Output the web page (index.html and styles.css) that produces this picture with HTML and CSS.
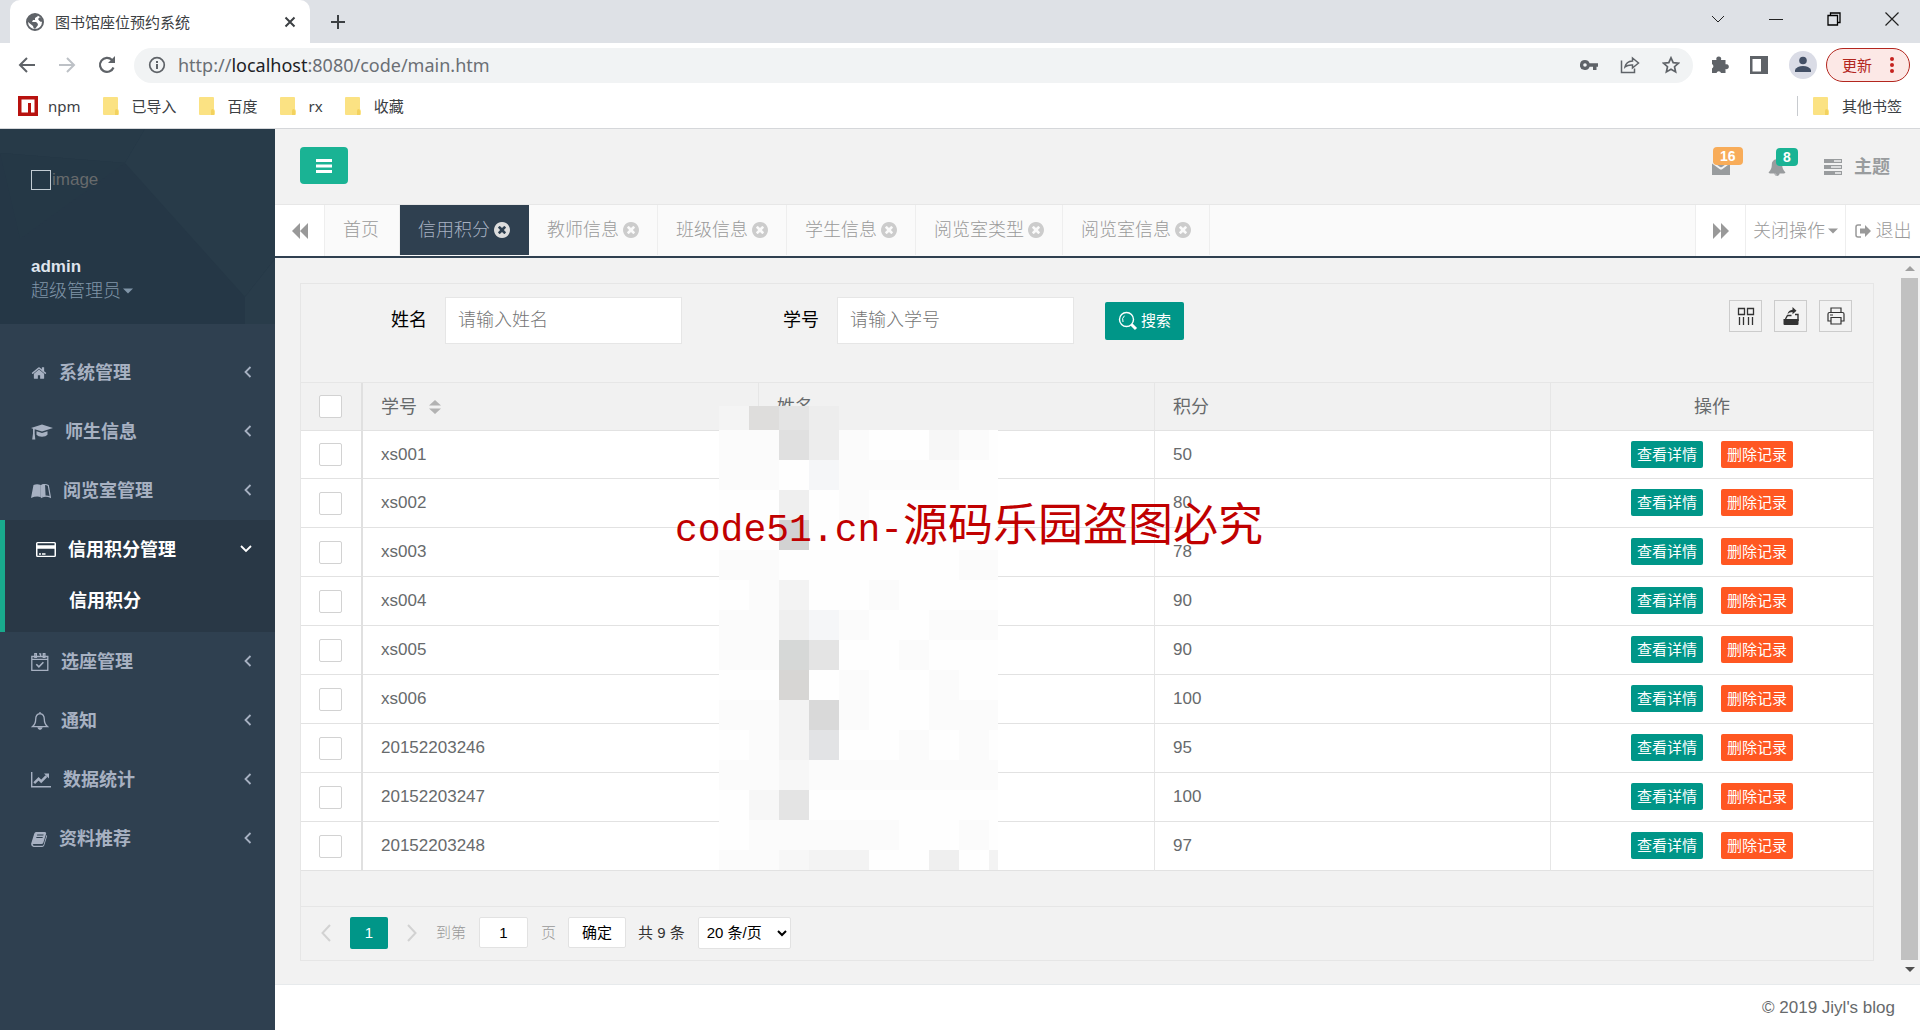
FILE: index.html
```html
<!DOCTYPE html>
<html lang="zh-CN">
<head>
<meta charset="utf-8">
<title>图书馆座位预约系统</title>
<link rel="stylesheet" href="styles.css">
</head>
<body>
<svg class="sprite" aria-hidden="true">
  <symbol id="i-home" viewBox="0 0 1792 1792"><path d="M1472 992v480q0 26-19 45t-45 19h-384v-384h-256v384h-384q-26 0-45-19t-19-45v-480q0-1 .5-3t.5-3l575-474 575 474q1 2 1 6zm223-69l-62 74q-8 9-21 11h-3q-13 0-21-7l-692-577-692 577q-12 8-24 7-13-2-21-11l-62-74q-8-10-7-23.5t11-21.5l719-599q32-26 76-26t76 26l244 204v-195q0-14 9-23t23-9h192q14 0 23 9t9 23v408l219 182q10 8 11 21.5t-7 23.5z"/></symbol>
  <symbol id="i-bell" viewBox="0 0 1792 1792"><path d="M912 1696q0-16-16-16-59 0-101.5-42.5t-42.5-101.5q0-16-16-16t-16 16q0 73 51.5 124.5t124.5 51.5q16 0 16-16zm816-288q0 52-38 90t-90 38h-448q0 106-75 181t-181 75-181-75-75-181h-448q-52 0-90-38t-38-90q50-42 91-88t85-119.5 74.5-158.5 50-206 19.5-260q0-152 117-282.5t307-158.5q-8-19-8-39 0-40 28-68t68-28 68 28 28 68q0 20-8 39 190 28 307 158.5t117 282.5q0 139 19.5 260t50 206 74.5 158.5 85 119.5 91 88z"/></symbol>
  <symbol id="i-close" viewBox="128 128 1536 1536"><path d="M1277 1122q0-26-19-45l-181-181 181-181q19-19 19-45 0-27-19-46l-90-90q-19-19-46-19-26 0-45 19l-181 181-181-181q-19-19-45-19-27 0-46 19l-90 90q-19 19-19 46 0 26 19 45l181 181-181 181q-19 19-19 45 0 27 19 46l90 90q19 19 46 19 26 0 45-19l181-181 181 181q19 19 45 19 27 0 46-19l90-90q19-19 19-46zm387-226q0 209-103 385.5t-279.5 279.5-385.5 103-385.5-103-279.5-279.5-103-385.5 103-385.5 279.5-279.5 385.5-103 385.5 103 279.5 279.5 103 385.5z"/></symbol>
  <symbol id="i-cap" viewBox="0 0 22 18"><path d="M11 1.500L22 5l-11 3.600L3.700 6.200v4.300l.6 6H1.200l.8-6V5.700L0 5z"/><path d="M5.500 8.300L11 10l5.500-1.700v3.500q-1.500 2-5.500 2t-5.500-2z"/></symbol>
  <symbol id="i-reader" viewBox="0 0 20 18"><path d="M2.500 3Q6 1.300 9.800 3v12.300Q6 13.600 0 16z"/><path d="M10.500 3.500Q14 1.500 17.300 3.500L19.400 15.300Q15 13 10.500 15.300z" fill="none" stroke="currentColor" stroke-width="1.200"/><path d="M10 3q2.500-1.200 4-1l.6 12q-2.500 0-4.600 1.300z"/></symbol>
  <symbol id="i-card" viewBox="0 0 20 18"><path fill-rule="evenodd" d="M1.500 1h17Q20 1 20 2.500v12q0 1.500-1.500 1.500h-17Q0 16 0 14.500v-12Q0 1 1.500 1zm0 1.300v2h17v-2zm0 5.400v7h17v-7zM3 12.300h2v1.400H3zm3 0h3.500v1.400H6z"/></symbol>
  <symbol id="i-calendar" viewBox="0 0 18 18"><g fill="none" stroke="currentColor" stroke-width="1.300"><path d="M.8 3.500h16v13.800H.8z"/><path d="M1 6.300h16M3.800.7h1.600v3.600H3.800zM12.300.7h1.600v3.600h-1.600zM8 .9h1.600v3"/><path d="M5.300 11.200l2.600 2.600 4.500-4.500" stroke-width="1.600"/></g></symbol>
  <symbol id="i-bell-o" viewBox="0 0 18 18"><path d="M9 1.600C5.700 2 4.700 4.600 4.700 7.200c0 3.700-1.500 6-3.400 7.500h15.400c-1.900-1.500-3.400-3.800-3.400-7.500C13.300 4.600 12.300 2 9 1.600zM9 0v1.600" fill="none" stroke="currentColor" stroke-width="1.300"/><path d="M6.300 15.300h5.400Q11 18 9 18t-2.700-2.700z"/></symbol>
  <symbol id="i-chart" viewBox="0 0 20 18"><path d="M.7 1v14.800H20" fill="none" stroke="currentColor" stroke-width="1.400"/><path d="M3.200 12.200l4.400-4.400 2.600 2.600 5.200-5.200" fill="none" stroke="currentColor" stroke-width="2.500"/><path d="M13 2.500h5v5z"/></symbol>
  <symbol id="i-book" viewBox="0 0 16 18"><path fill-rule="evenodd" d="M5 2h9q1.600.3 1 2l-2.600 8.500q-.5 1.500-2 1.500H2.500q-1 0-.7.8.2.9 1.500.9h8q1 0 1.300-1L15.500 5q.8.700.4 1.800L13.200 15.600q-.5 1.400-2 1.400H2.600Q-.3 16.300.2 13.500L3.300 3.500Q3.800 2 5 2zm1.200 2.500L6 5.600h6.300l.3-1.100zm-.7 2.400L5.200 8h6.300l.3-1.100z"/></symbol>
  <symbol id="i-left" viewBox="0 0 10 16"><path d="M7.500 3L2.500 8l5 5" fill="none" stroke="currentColor" stroke-width="1.800"/></symbol>
  <symbol id="i-down" viewBox="0 0 14 10"><path d="M2 2l5 5 5-5" fill="none" stroke="currentColor" stroke-width="1.800"/></symbol>
  <symbol id="i-caret" viewBox="0 0 10 6"><path d="M0 .5h10L5 5.500z"/></symbol>
  <symbol id="i-back2" viewBox="0 0 16 16"><path d="M8 0v16L0 8zM16 0v16L8 8z"/></symbol>
  <symbol id="i-fwd2" viewBox="0 0 16 16"><path d="M0 0v16l8-8zM8 0v16l8-8z"/></symbol>
  <symbol id="i-folder" viewBox="0 0 16 18"><path d="M1 0h13q1 0 1 1v11l1 2v3q0 1-1 1H1q-1 0-1-1V1q0-1 1-1z" fill="#fbe283"/><path d="M12 18v-4q0-2 1.500-2t1.500 2v4z" fill="#f3d25e"/></symbol>
</svg>

<header class="chrome">
  <div class="tabstrip">
    <div class="browser-tab">
      <svg class="ico18" viewBox="0 0 18 18"><circle cx="9" cy="9" r="8" fill="none" stroke="#5f6368" stroke-width="2"/><path d="M2 5q3-4 7-4 3 0 3 2L9 5v2H7l-1 2h4q2 1 2 3l-3 4q-2-1-2-3l-5-4zM12 6l2-2 3 4-2 1q-2-1-3-3z" fill="#5f6368"/></svg>
      <span class="browser-title">图书馆座位预约系统</span>
      <button class="plain" aria-label="关闭标签页"><svg width="12" height="12" viewBox="0 0 12 12"><path d="M1.500 1.500l9 9m0-9l-9 9" stroke="#3c4043" stroke-width="2"/></svg></button>
    </div>
    <button class="plain newtab" aria-label="新标签页"><svg width="16" height="16" viewBox="0 0 16 16"><path d="M8 1v14M1 8h14" stroke="#3c4043" stroke-width="2"/></svg></button>
    <div class="window-buttons">
      <button class="plain" aria-label="搜索标签页"><svg width="14" height="14" viewBox="0 0 14 14"><path d="M1 4l6 6 6-6" fill="none" stroke="#222"/></svg></button>
      <button class="plain" aria-label="最小化"><svg width="14" height="14" viewBox="0 0 14 14"><path d="M0 7.500h14" stroke="#222"/></svg></button>
      <button class="plain" aria-label="还原"><svg width="14" height="14" viewBox="0 0 14 14"><path d="M1 3.500h9.500V13H1zM3.500 3.500V1H13v9.500h-2.500" fill="none" stroke="#000" stroke-width="1.300"/></svg></button>
      <button class="plain" aria-label="关闭"><svg width="14" height="14" viewBox="0 0 14 14"><path d="M.5.5l13 13m0-13l-13 13" stroke="#222" stroke-width="1.200"/></svg></button>
    </div>
  </div>
  <div class="addressbar">
    <button class="plain" aria-label="后退"><svg width="18" height="18" viewBox="0 0 18 18"><path d="M17 9H2m7-7L2 9l7 7" fill="none" stroke="#5f6368" stroke-width="2"/></svg></button>
    <button class="plain" aria-label="前进"><svg width="18" height="18" viewBox="0 0 18 18"><path d="M1 9h15M9 2l7 7-7 7" fill="none" stroke="#bdc1c6" stroke-width="2"/></svg></button>
    <button class="plain" aria-label="重新加载"><svg width="18" height="18" viewBox="0 0 18 18"><path d="M15.500 11.500A7 7 0 1 1 14 4" fill="none" stroke="#5f6368" stroke-width="2.200"/><path d="M17 0v7h-7z" fill="#5f6368"/></svg></button>
    <div class="omnibox">
      <svg width="18" height="18" viewBox="0 0 18 18"><circle cx="9" cy="9" r="7.300" fill="none" stroke="#5f6368" stroke-width="1.700"/><path d="M9 8v5M9 5v2" stroke="#5f6368" stroke-width="2"/></svg>
      <span class="url">http://<b>localhost</b>:8080/code/main.htm</span>
      <svg width="18" height="18" viewBox="0 0 18 18"><path fill-rule="evenodd" d="M5 4a5 5 0 0 1 4.600 3.200H18v3.600h-1.500V14H13v-3.200H9.600A5 5 0 1 1 5 4zm0 3.200a1.800 1.800 0 1 0 0 3.600 1.800 1.800 0 0 0 0-3.600z" fill="#5f6368"/></svg>
      <svg width="20" height="18" viewBox="0 0 20 18"><path d="M1.500 4.500v12h13v-4M5 11q1-5.500 7.500-6V2l6 5-6 5V9q-5-.2-7.500 2z" fill="none" stroke="#5f6368" stroke-width="1.500"/></svg>
      <svg width="18" height="18" viewBox="0 0 18 18"><path d="M9 1.800l2.200 4.800 5.200.6-3.900 3.500 1.100 5.200L9 13.300l-4.600 2.600 1.100-5.200-3.900-3.500 5.200-.6z" fill="none" stroke="#5f6368" stroke-width="1.700"/></svg>
    </div>
    <div class="browser-actions">
      <svg width="18" height="18" viewBox="0 0 18 18"><path d="M1 4h4.500a2.500 2.500 0 1 1 4.500 0h4.500v4.300a2.500 2.500 0 1 1 0 4.700v4H10a2.300 2.300 0 0 0-4.500 0H1v-4.500a2.500 2.500 0 0 0 0-4.500z" fill="#5f6368"/></svg>
      <svg width="18" height="18" viewBox="0 0 18 18"><path fill-rule="evenodd" d="M0 0h18v18H0zM2.500 3v12.500H11V3z" fill="#5f6368"/></svg>
      <svg width="28" height="28" viewBox="0 0 28 28"><circle cx="14" cy="14" r="14" fill="#dadce6"/><circle cx="14" cy="9.500" r="3.800" fill="#435066"/><path d="M6 21v-2q2-4 8-4t8 4v2z" fill="#435066"/></svg>
      <button class="update">更新<svg width="4" height="16" viewBox="0 0 4 16"><g fill="#c5221f"><circle cx="2" cy="2" r="2"/><circle cx="2" cy="8" r="2"/><circle cx="2" cy="14" r="2"/></g></svg></button>
    </div>
  </div>
  <nav class="bookmarks">
    <a href="#"><svg width="20" height="20" viewBox="0 0 20 20"><path d="M0 0h20v20H0z" fill="#b8120f"/><path d="M3.500 3.500h13v13H13V7h-3v9.500H3.500z" fill="#fff"/></svg>npm</a>
    <a href="#"><svg width="16" height="18"><use href="#i-folder"/></svg>已导入</a>
    <a href="#"><svg width="16" height="18"><use href="#i-folder"/></svg>百度</a>
    <a href="#"><svg width="16" height="18"><use href="#i-folder"/></svg>rx</a>
    <a href="#"><svg width="16" height="18"><use href="#i-folder"/></svg>收藏</a>
    <a href="#" class="other"><svg width="16" height="18"><use href="#i-folder"/></svg>其他书签</a>
  </nav>
</header>

<div class="app">
  <aside class="sidebar">
    <div class="profile">
      <svg class="profile-bg" viewBox="0 0 275 195" preserveAspectRatio="none"><path d="M0 0h145l-20 34L0 24z" fill="#273a48"/><path d="M145 0h130v130l-30 38L125 34z" fill="#283b49"/><path d="M0 24l125 10L20 110z" fill="#253846"/><path d="M275 130l-30 38v27h30z" fill="#293c4a"/></svg>
      <div class="avatar"><span class="avatar-box"></span>image</div>
      <strong>admin</strong>
      <a href="#" class="role">超级管理员<svg width="10" height="6"><use href="#i-caret"/></svg></a>
    </div>
    <nav class="menu">
      <a href="#"><svg width="16" height="18"><use href="#i-home"/></svg>系统管理<svg class="arrow" width="10" height="16"><use href="#i-left"/></svg></a>
      <a href="#"><svg width="22" height="18"><use href="#i-cap"/></svg>师生信息<svg class="arrow" width="10" height="16"><use href="#i-left"/></svg></a>
      <a href="#"><svg width="20" height="18"><use href="#i-reader"/></svg>阅览室管理<svg class="arrow" width="10" height="16"><use href="#i-left"/></svg></a>
      <div class="group">
        <a href="#"><svg width="20" height="18"><use href="#i-card"/></svg>信用积分管理<svg class="arrow" width="14" height="10"><use href="#i-down"/></svg></a>
        <a href="#" class="sub">信用积分</a>
      </div>
      <a href="#"><svg width="18" height="18"><use href="#i-calendar"/></svg>选座管理<svg class="arrow" width="10" height="16"><use href="#i-left"/></svg></a>
      <a href="#"><svg width="18" height="18"><use href="#i-bell-o"/></svg>通知<svg class="arrow" width="10" height="16"><use href="#i-left"/></svg></a>
      <a href="#"><svg width="20" height="18"><use href="#i-chart"/></svg>数据统计<svg class="arrow" width="10" height="16"><use href="#i-left"/></svg></a>
      <a href="#"><svg width="16" height="18"><use href="#i-book"/></svg>资料推荐<svg class="arrow" width="10" height="16"><use href="#i-left"/></svg></a>
    </nav>
  </aside>

  <div class="main">
    <div class="navbar">
      <button class="toggle" aria-label="收起菜单"><svg width="16" height="14" viewBox="0 0 16 14"><path d="M0 1.500h16M0 7h16M0 12.500h16" stroke="#fff" stroke-width="3"/></svg></button>
      <div class="navbar-right">
        <a href="#" class="notice"><svg width="18" height="16" viewBox="0 0 18 16"><path d="M0 4.500l7.500 5.500q1.500 1 3 0L18 4.500V16H0z"/><path d="M1 1h16v2l-7 5q-1 .7-2 0L1 3z"/></svg><span class="badge orange">16</span></a>
        <a href="#" class="notice"><svg width="18" height="18"><use href="#i-bell"/></svg><span class="badge green">8</span></a>
        <a href="#" class="theme"><svg width="18" height="16" viewBox="0 0 18 16"><path fill-rule="evenodd" d="M0 0h18v4H0zm10 1.300v1.400h7V1.300zM0 6h18v4H0zm7 1.300v1.400h10V7.300zM0 12h18v4H0zm11 1.300v1.400h6v-1.400z"/></svg>主题</a>
      </div>
    </div>
    <div class="tabs">
      <button class="tab-btn narrow" aria-label="向左滚动"><svg width="16" height="16"><use href="#i-back2"/></svg></button>
      <nav class="tab-list">
        <a href="#">首页</a>
        <a href="#" class="active">信用积分<svg width="16" height="16"><use href="#i-close"/></svg></a>
        <a href="#">教师信息<svg width="16" height="16"><use href="#i-close"/></svg></a>
        <a href="#">班级信息<svg width="16" height="16"><use href="#i-close"/></svg></a>
        <a href="#">学生信息<svg width="16" height="16"><use href="#i-close"/></svg></a>
        <a href="#">阅览室类型<svg width="16" height="16"><use href="#i-close"/></svg></a>
        <a href="#">阅览室信息<svg width="16" height="16"><use href="#i-close"/></svg></a>
      </nav>
      <button class="tab-btn narrow" aria-label="向右滚动"><svg width="16" height="16"><use href="#i-fwd2"/></svg></button>
      <button class="tab-btn wide">关闭操作<svg width="10" height="6"><use href="#i-caret"/></svg></button>
      <a href="#" class="tab-btn exit"><svg width="16" height="14" viewBox="0 0 16 14"><path d="M6 1H3Q1 1 1 3v8q0 2 2 2h3" fill="none" stroke="currentColor" stroke-width="1.500"/><path d="M5 4.500h5V1l6 6-6 6V9.500H5z"/></svg>退出</a>
    </div>

    <div class="content">
      <section class="card">
        <form class="search">
          <label for="name">姓名</label><input id="name" type="text" placeholder="请输入姓名">
          <label for="number">学号</label><input id="number" type="text" placeholder="请输入学号">
          <button type="button" class="search-btn"><svg width="20" height="20" viewBox="0 0 20 20"><g fill="none" stroke="#fff"><circle cx="8.500" cy="8.500" r="7" stroke-width="1.400"/><path d="M5 11Q3.500 7 6.500 4.700"/><path d="M13.500 13.500l4.500 4.500" stroke-width="3"/></g></svg>搜索</button>
          <div class="tools">
            <button type="button" aria-label="筛选列"><svg width="18" height="18" viewBox="0 0 18 18"><path d="M1.500 1.500h6v6h-6zM10.500 1.500h6v6h-6zM2.500 10v8M6.500 10v8M11.500 10v8M15.500 10v8" fill="none" stroke="#333" stroke-width="1.300"/></svg></button>
            <button type="button" aria-label="导出"><svg width="18" height="18" viewBox="0 0 18 18"><path d="M1.500 12h15v5q0 1-1 1h-13q-1 0-1-1z" fill="#333"/><path d="M3.500 12l2-3.500h4M13 7.500h3V14" fill="none" stroke="#333" stroke-width="1.400"/><path d="M5.500 7q1-4 5-4.300V0l4 3.800-4 3.400V5Q7.500 5 5.500 7z" fill="#333"/></svg></button>
            <button type="button" aria-label="打印"><svg width="18" height="18" viewBox="0 0 18 18"><g fill="none" stroke="#333" stroke-width="1.200"><path d="M4 5.500V1h10v4.500M4 14H1V7q0-1.500 1.500-1.500h13Q17 5.500 17 7v7h-3M4 10.500h10V17H4zM3 8h3"/></g></svg></button>
          </div>
        </form>
        <table>
          <colgroup><col class="c-check"><col><col><col><col class="c-op"></colgroup>
          <thead><tr><th><input type="checkbox" aria-label="全选"></th><th>学号<svg class="sort" width="12" height="16" viewBox="0 0 12 16"><path d="M0 6.500h12L6 1zM0 9.500h12L6 15z" fill="#b2b2b2"/></svg></th><th>姓名</th><th>积分</th><th class="op">操作</th></tr></thead>
          <tbody>
            <tr><td><input type="checkbox" aria-label="选择 xs001"></td><td>xs001</td><td></td><td>50</td><td class="op"><button class="view">查看详情</button><button class="del">删除记录</button></td></tr>
            <tr><td><input type="checkbox" aria-label="选择 xs002"></td><td>xs002</td><td></td><td>80</td><td class="op"><button class="view">查看详情</button><button class="del">删除记录</button></td></tr>
            <tr><td><input type="checkbox" aria-label="选择 xs003"></td><td>xs003</td><td></td><td>78</td><td class="op"><button class="view">查看详情</button><button class="del">删除记录</button></td></tr>
            <tr><td><input type="checkbox" aria-label="选择 xs004"></td><td>xs004</td><td></td><td>90</td><td class="op"><button class="view">查看详情</button><button class="del">删除记录</button></td></tr>
            <tr><td><input type="checkbox" aria-label="选择 xs005"></td><td>xs005</td><td></td><td>90</td><td class="op"><button class="view">查看详情</button><button class="del">删除记录</button></td></tr>
            <tr><td><input type="checkbox" aria-label="选择 xs006"></td><td>xs006</td><td></td><td>100</td><td class="op"><button class="view">查看详情</button><button class="del">删除记录</button></td></tr>
            <tr><td><input type="checkbox" aria-label="选择 20152203246"></td><td>20152203246</td><td></td><td>95</td><td class="op"><button class="view">查看详情</button><button class="del">删除记录</button></td></tr>
            <tr><td><input type="checkbox" aria-label="选择 20152203247"></td><td>20152203247</td><td></td><td>100</td><td class="op"><button class="view">查看详情</button><button class="del">删除记录</button></td></tr>
            <tr><td><input type="checkbox" aria-label="选择 20152203248"></td><td>20152203248</td><td></td><td>97</td><td class="op"><button class="view">查看详情</button><button class="del">删除记录</button></td></tr>
          </tbody>
        </table>
        <div class="pager">
          <button class="plain step" aria-label="上一页"><svg width="10" height="18" viewBox="0 0 10 18"><path d="M9 1L1.500 9 9 17" fill="none" stroke="#d2d2d2" stroke-width="2"/></svg></button>
          <button class="page">1</button>
          <button class="plain step" aria-label="下一页"><svg width="10" height="18" viewBox="0 0 10 18"><path d="M1 1l7.500 8L1 17" fill="none" stroke="#d2d2d2" stroke-width="2"/></svg></button>
          <label class="goto">到第<input type="text" value="1">页</label>
          <button class="confirm">确定</button>
          <span class="total">共 9 条</span>
          <select aria-label="每页条数"><option>20 条/页</option></select>
        </div>
        <svg class="mosaic" width="279" height="464" viewBox="0 0 279 464" shape-rendering="crispEdges" aria-hidden="true">
          <path fill="#fefefe" d="M0 24h279v440H0z"/><path fill="#f1f1f1" d="M0 0h279v24H0z"/>
          <path fill="#f4f4f4" d="M0 0h30v24H0z"/><path fill="#dedddc" d="M30 0h30v24H30z"/><path fill="#e4e4e4" d="M60 0h30v24H60z"/><path fill="#ededed" d="M90 0h30v54H90z"/>
          <path fill="#e0e0e0" d="M60 24h30v30H60z"/>
          <path fill="#fbfbfb" d="M0 24h60v60H0zM120 24h30v60h-30zM150 54h90v30h-90zM240 24h30v30h-30zM120 84h30v30h-30zM0 144h60v30H0zM240 144h39v30h-39zM30 174h30v30H30zM150 174h30v30h-30zM0 204h60v60H0zM120 204h30v30h-30zM210 204h69v30h-69zM180 234h30v30h-30zM120 264h30v30h-30zM210 264h30v30h-30zM0 294h60v30H0zM120 294h30v30h-30zM210 294h69v30h-69zM30 324h30v30H30zM180 324h30v30h-30zM240 324h30v30h-30zM0 354h279v30H0zM30 414h150v30H30zM240 414h30v30h-30zM0 444h60v20H0z"/>
          <path fill="#f7f7f7" d="M210 24h30v30h-30zM60 354h30v30H60zM30 384h30v30H30zM60 444h30v20H60z"/>
          <path fill="#f5f6f8" d="M90 54h30v30H90zM90 204h30v30H90z"/>
          <path fill="#efefef" d="M60 84h30v30H60zM60 204h30v30H60zM210 444h30v20h-30z"/>
          <path fill="#d2d2d2" d="M60 114h30v30H60z"/><path fill="#f3f3f3" d="M60 174h30v30H60zM60 294h30v60H60zM90 444h60v20H90zM270 444h9v20h-9z"/>
          <path fill="#d6d8d7" d="M60 234h30v30H60z"/><path fill="#e4e4e4" d="M90 234h30v30H90zM60 384h30v30H60z"/>
          <path fill="#d7d6d4" d="M60 264h30v30H60z"/><path fill="#d9d9d9" d="M90 294h30v30H90z"/><path fill="#e2e3e5" d="M90 324h30v30H90z"/>
        </svg>
        <div class="watermark"><span>code51.cn-</span>源码乐园盗图必究</div>
      </section>
      <div class="scrollbar" aria-hidden="true"><svg width="10" height="5" viewBox="0 0 10 5"><path d="M0 5h10L5 0z" fill="#a0a0a0"/></svg><div class="thumb"></div><svg width="10" height="5" viewBox="0 0 10 5"><path d="M0 0h10L5 5z" fill="#505050"/></svg></div>
    </div>
    <footer>© 2019 Jiyl's blog</footer>
  </div>
</div>
</body>
</html>
```
FILE: styles.css
```css
* { box-sizing: border-box; }
body {
  margin: 0;
  min-height: 100vh;
  display: flex;
  flex-direction: column;
  font: 17px/24px "Liberation Sans", "Noto Sans CJK SC", sans-serif;
  color: #676a6c;
  background: #fff;
}
a { color: inherit; text-decoration: none; }
button, input, select { font: inherit; color: inherit; margin: 0; }
svg { fill: currentColor; flex: none; display: block; }
.sprite { position: absolute; width: 0; height: 0; }
.plain { border: 0; padding: 0; background: none; display: flex; }

/* browser frame */
.chrome { font: 15px/20px "Noto Sans", "Noto Sans CJK SC", sans-serif; color: #3c4043; border-bottom: 1px solid #d5d7da; }
.tabstrip { height: 43px; background: #dee1e6; display: flex; align-items: center; padding-left: 10px; }
.browser-tab { width: 300px; height: 43px; background: #fff; border-radius: 10px 10px 0 0; display: flex; align-items: center; gap: 11px; padding: 0 14px 0 16px; }
.ico18 { width: 18px; height: 18px; }
.browser-title { flex: 1; }
.newtab { margin-left: 20px; }
.window-buttons { margin-left: auto; display: flex; gap: 44px; padding: 0 21px 6px 0; }
.addressbar { height: 44px; display: flex; align-items: center; gap: 22px; padding: 0 10px 0 18px; }
.omnibox { flex: 1; height: 35px; margin-left: -4px; border-radius: 18px; background: #f1f3f4; display: flex; align-items: center; gap: 22px; padding: 0 13px 0 14px; }
.url { flex: 1; margin-left: -10px; font-size: 18px; color: #6b6f74; }
.url b { font-weight: 400; color: #202124; }
.browser-actions { display: flex; align-items: center; gap: 21px; margin-left: -4px; }
.update { height: 34px; width: 84px; margin-left: -12px; padding: 0 15px; border: 1px solid #b3261e; border-radius: 17px; background: #fce8e6; color: #b3261e; display: flex; align-items: center; justify-content: space-between; }
.bookmarks { height: 41px; display: flex; align-items: center; gap: 22px; padding: 0 18px 3px 18px; }
.bookmarks a { display: flex; align-items: center; gap: 13px; }
.bookmarks a:first-child { gap: 10px; }
.bookmarks .other { margin-left: auto; border-left: 1px solid #c8cbcf; padding-left: 15px; }

/* sidebar */
.app { flex: 1; display: flex; }
.sidebar { width: 275px; flex: none; background: #2f4050; color: #a7b1c2; }
.profile { position: relative; height: 195px; padding: 38px 31px 0; background: #253746; display: flex; flex-direction: column; }
.profile-bg { position: absolute; inset: 0; width: 100%; height: 100%; }
.profile > :not(.profile-bg) { position: relative; }
.avatar { display: flex; align-items: center; height: 26px; margin-bottom: 62px; color: #676a6c; }
.avatar-box { width: 20px; height: 20px; border: 1px solid #c3ccd3; margin-right: 1px; }
.profile strong { color: #dfe4ed; line-height: 24px; }
.role { display: flex; align-items: center; gap: 2px; font-size: 18px; color: #8095a8; font-weight: 300; }
.menu { padding-top: 19px; font-size: 18px; font-weight: 700; }
.menu a { display: flex; align-items: center; gap: 12px; height: 59px; padding: 0 22px 0 31px; }
.menu .arrow { margin-left: auto; margin-bottom: 2px; }
.group { background: #293846; border-left: 5px solid #19aa8d; color: #fff; padding-bottom: 9px; }
.group .sub { height: 44px; padding-left: 64px; }

/* top bar and tabs */
.main { flex: 1; min-width: 0; display: flex; flex-direction: column; }
.navbar { height: 75px; background: #f2f2f2; display: flex; align-items: flex-start; justify-content: space-between; padding: 18px 30px 0 25px; }
.toggle { width: 48px; height: 37px; border: 0; border-radius: 4px; background: #1ab394; display: flex; align-items: center; justify-content: center; }
.navbar-right { display: flex; align-items: center; gap: 38px; height: 37px; padding-top: 2px; color: #999c9e; }
.notice { position: relative; }
.badge { position: absolute; left: 8px; bottom: 10px; padding: 0 7px; border-radius: 4px; color: #fff; font-size: 14px; line-height: 18px; font-weight: 700; }
.orange { background: #f8ac59; left: 1px; }
.green { background: #1ab394; }
.theme { display: flex; align-items: center; gap: 12px; font-size: 18px; font-weight: 700; }
.tabs { height: 54px; display: flex; border-top: 1px solid #e7e7e7; border-bottom: 2px solid #2f4050; background: #fafafa; color: #999; font-size: 18px; font-weight: 300; }
.tab-list { flex: 1; display: flex; padding-bottom: 1px; }
.tab-list a { display: flex; align-items: center; gap: 4px; min-width: 75px; padding: 0 18px; border-right: 1px solid #eee; }
.tab-list svg { color: #ccc; }
.tab-list .active { background: #2f4050; color: #a7b1c2; border-color: #2f4050; }
.tab-list .active svg { color: #ddd; }
.tab-btn { display: flex; align-items: center; justify-content: center; gap: 3px; padding: 0; border: 0; border-left: 1px solid #eee; background: #fff; font-weight: 300; }
.narrow { width: 50px; }
.narrow:first-child { border-left: 0; border-right: 1px solid #eee; }
.wide { width: 100px; }
.exit { width: 75px; gap: 5px; }

/* content */
.content { flex: 1; display: flex; align-items: stretch; background: #f2f2f2; border-bottom: 1px solid #e7eaec; padding-bottom: 2px; }
.card { position: relative; flex: 1; align-self: flex-start; margin: 25px 27px 21px 25px; border: 1px solid #e6e6e6; }
.search { height: 98px; display: flex; align-items: flex-start; padding: 13px 21px 0 0; font-size: 18px; }
.search label { width: 144px; padding: 11px 18px 0 0; text-align: right; color: #000; }
.search input + label { width: 155px; }
.search input { width: 237px; height: 47px; padding: 0 12px; border: 1px solid #e6e6e6; background: #fff; font-weight: 300; }
.search input::placeholder { color: #757575; }
.search-btn { margin: 5px 0 0 31px; width: 79px; height: 38px; padding: 0; border: 0; border-radius: 2px; background: #009688; color: #fff; font-size: 15px; display: flex; align-items: center; justify-content: center; gap: 3px; }
.tools { margin-left: auto; display: flex; gap: 12px; padding-top: 3px; }
.tools button { width: 33px; height: 32px; padding: 0; border: 1px solid #ccc; background: none; display: flex; align-items: center; justify-content: center; }
table { width: 100%; border-collapse: separate; border-spacing: 0; table-layout: fixed; border-top: 1px solid #e6e6e6; }
.c-check { width: 62px; }
.c-op { width: 322px; }
th, td { height: 49px; padding: 0 18px; border-bottom: 1px solid #e2e2e2; border-right: 1px solid #e6e6e6; text-align: left; font-weight: 400; }
th { height: 48px; background: #f1f1f1; font-size: 18px; }
td { background: #fff; }
th:last-child, td:last-child { border-right: 0; }
th:first-child, td:first-child { border-right: 2px solid #e0e0e0; }
.sort { display: inline-block; vertical-align: -2px; margin-left: 12px; }
input[type=checkbox] { appearance: none; display: block; width: 23px; height: 23px; border: 1px solid #d2d2d2; border-radius: 2px; background: #fff; }
.op { text-align: center; }
td.op { font-size: 0; padding-top: 3px; }
.view, .del { height: 27px; width: 72px; padding: 0; border: 0; border-radius: 2px; color: #fff; font-size: 15px; line-height: 27px; background: #009688; }
.del { margin-left: 18px; background: #ff5722; }
tbody tr:first-child td { height: 48px; }
.pager { margin-top: 35px; height: 54px; border-top: 1px solid #e6e6e6; display: flex; align-items: center; padding: 0 0 2px 20px; font-size: 15px; color: #333; }
.page { width: 38px; height: 32px; margin: 0 19px; padding: 0; border: 0; border-radius: 2px; background: #009688; color: #fff; }
.goto { display: flex; align-items: center; margin-left: 19px; color: #999; font-weight: 300; }
.goto input { width: 49px; height: 31px; margin: 0 13px; padding: 0; text-align: center; border: 1px solid #e2e2e2; border-radius: 2px; color: #000; background: #fff; }
.confirm { width: 58px; height: 31px; margin: 0 12px; padding: 0; border: 1px solid #e2e2e2; border-radius: 2px; background: #fff; color: #000; }
.pager select { width: 93px; height: 32px; margin-left: 13px; padding: 0 4px; border: 1px solid #e2e2e2; border-radius: 2px; background: #fff; color: #000; }
.mosaic { position: absolute; left: 418px; top: 122px; }
.watermark { position: absolute; left: 374px; top: 217px; font-size: 45px; line-height: 50px; color: #c00000; white-space: nowrap; }
.watermark span { font-family: "Liberation Mono", monospace; font-size: 38px; }
.scrollbar { width: 19px; padding: 8px 2px 10px 0; display: flex; flex-direction: column; align-items: center; gap: 7px; }
.thumb { flex: 1; width: 17px; background: #c1c1c1; }
footer { height: 45px; padding: 11px 25px 0; text-align: right; background: #fff; }
```
